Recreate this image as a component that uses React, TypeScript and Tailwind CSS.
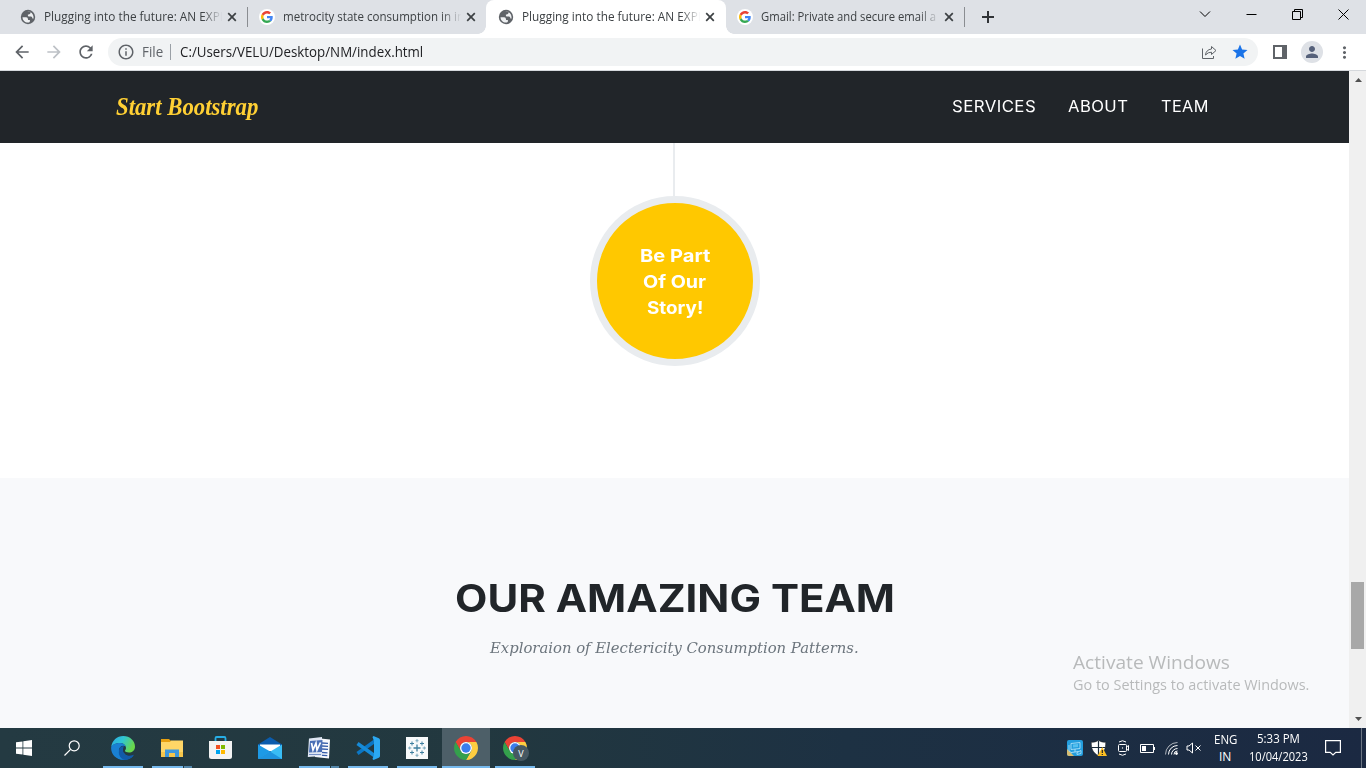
import { useLayoutEffect, useRef, useState } from "react";
import type { ReactNode } from "react";
import { MdArrowBack, MdArrowForward, MdRefresh, MdInfoOutline, MdStar, MdMoreVert, MdPerson } from "react-icons/md";

/* Single line of text stretched horizontally to a fixed width. */
function Fit({ w, className = "", children }: { w: number; className?: string; children: ReactNode }) {
  const ref = useRef<HTMLSpanElement>(null);
  const [scale, setScale] = useState(1);
  useLayoutEffect(() => {
    if (ref.current) setScale(w / ref.current.offsetWidth);
  }, [w]);
  return (
    <span className="inline-block" style={{ width: w }}>
      <span ref={ref} className={`inline-block origin-left whitespace-nowrap ${className}`} style={{ transform: `scaleX(${scale})` }}>
        {children}
      </span>
    </span>
  );
}

function GlobeIcon() {
  return (
    <svg viewBox="0 0 16 16" className="size-4 shrink-0">
      <circle cx="8" cy="8" r="7.200" fill="#5f6368" />
      <path fill="#eef0f2" d="M2.500 8.300h3.700q1.800.2 1.800 1.900v.9h1.900v1.200q0 .8-1 1.200C5.500 14 2.600 11.700 2.500 8.300z" />
      <path fill="#eef0f2" d="M7.200 2.600q2-.5 3.600.5l-.5 1.500q-.3.800-1.500.800H7.900v1.300q.1.700.9.700h2.300q.9.200 1.100 1.100l.2.900h1.200Q13.700 4.700 10.200 3z" />
    </svg>
  );
}

function GoogleIcon() {
  return (
    <span className="flex size-4 shrink-0 items-center justify-center rounded-full bg-white">
      <svg viewBox="0 0 48 48" className="size-3">
        <path fill="#EA4335" d="M24 9.5c3.54 0 6.71 1.22 9.21 3.6l6.85-6.85C35.9 2.38 30.47 0 24 0 14.62 0 6.51 5.38 2.56 13.22l7.98 6.19C12.43 13.72 17.74 9.5 24 9.5z" />
        <path fill="#4285F4" d="M46.98 24.55c0-1.57-.15-3.09-.38-4.55H24v9.02h12.94c-.58 2.96-2.26 5.48-4.78 7.18l7.73 6c4.51-4.18 7.09-10.36 7.09-17.65z" />
        <path fill="#FBBC05" d="M10.53 28.59c-.48-1.45-.76-2.99-.76-4.59s.27-3.14.76-4.59l-7.98-6.19C.92 16.46 0 20.12 0 24c0 3.88.92 7.54 2.56 10.78l7.97-6.19z" />
        <path fill="#34A853" d="M24 48c6.48 0 11.93-2.13 15.89-5.81l-7.73-6c-2.15 1.45-4.92 2.3-8.16 2.3-6.26 0-11.57-4.22-13.47-9.91l-7.98 6.19C6.51 42.62 14.62 48 24 48z" />
      </svg>
    </span>
  );
}

function ChromeIcon() {
  return (
    <svg viewBox="2 2 44 44" className="size-6">
      <path fill="#EA4335" d="M24 13H43.05A22 22 0 0 0 4.95 13L14.5 29.5A11 11 0 0 1 24 13z" />
      <path fill="#FFCD40" d="M43.05 13A22 22 0 0 1 24 46L33.5 29.5A11 11 0 0 0 24 13z" />
      <path fill="#34A04C" d="M4.95 13A22 22 0 0 0 24 46L33.5 29.5A11 11 0 0 1 14.5 29.5z" />
      <circle cx="24" cy="24" r="11" fill="#fff" />
      <circle cx="24" cy="24" r="8.6" fill="#3B7DED" />
    </svg>
  );
}

function Tab({ title, w, google, active, line }: { title: string; w: number; google?: boolean; active?: boolean; line?: boolean }) {
  return (
    <div className={`relative flex h-[34px] shrink-0 items-center pl-3 ${active ? "rounded-t-lg bg-white" : ""} ${active || line ? "-mr-px w-[240px]" : "w-[239px]"}`}>
      {active && (
        <>
          <span className="absolute bottom-0 -left-2 size-2 bg-[radial-gradient(circle_at_0_0,#dee1e6_7.5px,#fff_8px)]" />
          <span className="absolute -right-2 bottom-0 size-2 bg-[radial-gradient(circle_at_100%_0,#dee1e6_7.5px,#fff_8px)]" />
        </>
      )}
      {google ? <GoogleIcon /> : <GlobeIcon />}
      <div className="ml-2 h-[18px] w-[182px] shrink-0 text-[12px] leading-[18px] text-[#3c4043] [mask-image:linear-gradient(to_right,black_87%,transparent_98%)]">
        <Fit w={w}>{title}</Fit>
      </div>
      <svg viewBox="0 0 10 10" className="ml-px size-[10px] shrink-0">
        <path d="M1.2 1.2 8.8 8.8M8.8 1.2 1.2 8.8" stroke="#3c4043" strokeWidth="1.7" />
      </svg>
      {line && <span className="ml-[10px] h-5 w-px shrink-0 bg-[#8a8d91]" />}
    </div>
  );
}

function TaskSlot({ children, bar, active }: { children: ReactNode; bar?: "full" | "split"; active?: boolean }) {
  return (
    <div className={`relative flex h-10 shrink-0 items-center justify-center ${active ? "ml-px w-[48px] bg-[#4d5f68]" : "w-[49px]"}`}>
      {children}
      {bar && (
        <span className={`absolute bottom-0 flex h-[2px] gap-px ${active ? "inset-x-0" : "right-1 left-[5px]"}`}>
          <span className="flex-1 bg-[#76b9ed]" />
          {bar === "split" && <span className="w-2 bg-[#5487ab]" />}
        </span>
      )}
    </div>
  );
}

function TaskBar() {
  return (
    <div className="flex h-10 items-center bg-[linear-gradient(90deg,#243a42_0%,#22383f_35%,#1d3143_62%,#1b2942_100%)] text-white">
      <div className="flex w-[49px] justify-center pr-px">
        <svg viewBox="0 0 16 16" className="size-4">
          <path fill="#fff" d="M0 2.3 6.5 1.4V7.6H0zM7.3 1.3 16 0v7.6H7.3zM0 8.4h6.5v6.2L0 13.7zM7.3 8.4H16V16L7.3 14.7z" />
        </svg>
      </div>
      <div className="flex w-[49px] justify-center pr-1">
        <svg viewBox="0 0 16 16" className="size-4" fill="none" stroke="#fff" strokeWidth="1.2">
          <circle cx="10.2" cy="5.8" r="5" />
          <path d="M6.600 9.400.5 15.500" />
        </svg>
      </div>
      <TaskSlot bar="full">
        <svg viewBox="0 0 24 24" className="size-6">
          <defs>
            <linearGradient id="edgeTop" x1="0" y1="0" x2="1" y2=".4">
              <stop offset="0" stopColor="#2aa9e6" />
              <stop offset=".5" stopColor="#30c6d2" />
              <stop offset="1" stopColor="#69d84b" />
            </linearGradient>
            <linearGradient id="edgeBody" x1="0" y1="0" x2=".8" y2="1">
              <stop offset="0" stopColor="#1b94e0" />
              <stop offset="1" stopColor="#0a66be" />
            </linearGradient>
          </defs>
          <path fill="url(#edgeBody)" d="M1 9C0 17 5 24 13 24c4 0 7.300-1.700 9.500-4.500C20 21 15 20.500 13 17z" />
          <path fill="url(#edgeTop)" d="M.2 11C1 4.500 6 0 12.200 0 19 0 24 5 24 10.500c0 4-3 6-6 6-2.500 0-4-.8-4-1.700 0-.6 1-1 1-2.800C15 9 12 7 9 7 5 7 1.200 9 .2 11z" />
          <path fill="#125aa8" d="M8.500 12.500C6 18 10 24 15 23.800c3.500-.3 6-2.300 7.500-4.300.4-.6 0-.9-.5-.6-5 2-10 0-10-5 0-2.500 1.200-3.600 1.200-3.600s-3.500-.3-4.700 2.200z" />
          <path fill="#1a80d2" d="M.2 11C1.400 8.500 5 7 9 7c3.500 0 5.300 2 5.600 3.400-3.100-1.900-6.600.1-7.100 4.600-.3 4 2 7.600 5.500 8.900C5 24-.6 18 .2 11z" />
        </svg>
      </TaskSlot>
      <TaskSlot bar="split">
        <svg viewBox="0 0 22 18" className="h-[18px] w-[22px]">
          <path fill="#e8a010" d="M0 0h8l2 2v3H0z" />
          <path fill="#ffd667" d="M0 3h9l1-1.500h12V18H0z" />
          <path fill="#f7c64b" d="M0 13h22v5H0z" />
          <path fill="#3f98dc" d="M4 10.500h14V18h-4v-4H8v4H4z" />
        </svg>
      </TaskSlot>
      <TaskSlot>
        <svg viewBox="0 0 23 24" className="h-6 w-[23px]">
          <path d="M6.500 5.500V2.200c0-.8.400-1.200 1.200-1.200h7.600c.8 0 1.200.4 1.200 1.200v3.300" fill="none" stroke="#27aee6" strokeWidth="1.800" />
          <path fill="#f3f3f3" d="M0 5h23v15.500q0 2.500-2.500 2.500h-18Q0 23 0 20.500z" />
          <path fill="#f25022" d="M7 9h4v4H7z" /><path fill="#7fba00" d="M12 9h4v4h-4z" />
          <path fill="#00a4ef" d="M7 14h4v4H7z" /><path fill="#ffb900" d="M12 14h4v4h-4z" />
        </svg>
      </TaskSlot>
      <TaskSlot>
        <svg viewBox="0 0 24 22" className="h-[22px] w-6">
          <path fill="#0b5cad" d="M0 7.500 12 0l12 7.500V14H0z" />
          <path fill="#fff" d="M2 7.500h20V14H2z" />
          <path fill="#1d9ae6" d="M0 7.500 13 15 0 22z" />
          <path fill="#39bdf5" d="M24 7.500V22H0z" />
          <path fill="#1e94df" d="M0 22 12 14.500 24 22z" />
        </svg>
      </TaskSlot>
      <TaskSlot bar="split">
        <svg viewBox="0 0 24 24" className="size-6">
          <path fill="#f7f9fc" d="m9 2 14 1.500-1 19L8 21z" />
          <path stroke="#355da9" strokeWidth="1.300" d="m15 7 6 .4M15 10l6 .4M15 13l6 .4M9 16l11.500.8M9 18.800l11.300.9" />
          <path fill="#dfe7f4" d="M2 2.500 15 1v19L.8 21z" />
          <path fill="#4a70b6" d="M3 5 15.500 4l-.5 12-13 .5z" />
          <path fill="none" stroke="#fff" strokeWidth="1.700" d="m4.500 7 1.500 7 3-7 1 7 3.500-7.500" />
          <path stroke="#7590c5" d="M2 18.500h12" />
        </svg>
      </TaskSlot>
      <TaskSlot bar="full">
        <svg viewBox="0 0 24 24" className="size-6">
          <path fill="none" stroke="#0b77c5" strokeWidth="3.600" d="M19 5 1.500 17.500" />
          <path fill="none" stroke="#168bd8" strokeWidth="3.600" d="M1.500 7.500 19 20" />
          <path fill="#2ba8f2" d="m17.500 0 5.300 2.300q1.200.6 1.200 1.700v16q0 1.100-1.200 1.700L17.500 24l-1-1 1.500-4V5l-1.500-4z" />
        </svg>
      </TaskSlot>
      <TaskSlot bar="full">
        <svg viewBox="0 0 22 22" className="size-[22px]" fill="none" stroke="#3e7f9f">
          <path fill="#f8fafb" stroke="none" d="M0 0h22v22H0z" />
          <path strokeWidth="1.300" d="M11 7.500v7M7.500 11h7" />
          <path d="M6 4.500v4M4 6.500h4M16 4.500v4M14 6.500h4M6 13.500v4M4 15.500h4M16 13.500v4M14 15.500h4" />
          <path stroke="#7ba9bf" d="M11 2v3.400M9.500 3.700h3M11 16.600V20M9.500 18.300h3M2 11h3.400M3.700 9.500v3M16.600 11H20M18.300 9.500v3" />
        </svg>
      </TaskSlot>
      <TaskSlot bar="full" active><ChromeIcon /></TaskSlot>
      <TaskSlot bar="full">
        <ChromeIcon />
        <span className="absolute top-[17px] left-[23px] flex size-4 items-center justify-center rounded-full bg-[#465862] text-[9px] leading-none">V</span>
      </TaskSlot>

      <div className="ml-auto flex h-10 w-[299px] items-center">
        <svg viewBox="0 0 16 16" className="size-4">
          <rect width="16" height="16" rx="2" fill="#239ddd" />
          <path fill="#d7bd72" d="M0 9 7 16H2q-2 0-2-2z" />
          <path fill="none" stroke="#b9e7fb" strokeWidth=".8" d="M4 3.500 13 2.500v6l-9 1zM8 9v3M4.500 12.500l7-1M10 12.500l4-2v3l-4 1zM2 5v6l3 2" />
          <path fill="#55c0ef" d="M6 4.500 11 4v3L6 7.500z" />
        </svg>
        <svg viewBox="0 0 16 16" className="ml-2 size-4">
          <path fill="#fff" stroke="#111" strokeWidth=".5" d="M7.500.2C5.500 1.800 3 2.300.3 2.300c0 6 1 10.200 7.200 13.400 6.200-3.200 7.200-7.400 7.200-13.400-2.700 0-5.200-.5-7.200-2.100z" />
          <path stroke="#1a2a38" strokeWidth="1.200" d="M7.500.500v15M.5 7.500h14" />
          <path fill="#fcbf23" d="M11.300 7 16 16H6.500z" />
          <path stroke="#222" strokeWidth="1.200" d="M11.300 10v3M11.300 14v1" />
        </svg>
        <svg viewBox="0 0 14 18" className="ml-[10px] h-[18px] w-[14px]" fill="none" stroke="#fff">
          <path d="M2 3q3.500-2.500 7 0M2 15q3.500 2.500 7 0" />
          <rect x="1.500" y="5.500" width="8" height="7" rx="1" /><path d="m9.500 8 2-1.500v5L9.500 10" />
          <circle cx="5.500" cy="9" r=".3" />
        </svg>
        <svg viewBox="0 0 15 9" className="ml-[9px] h-[9px] w-[15px]" fill="none" stroke="#fff">
          <path d="M.5.500h13v8H.5zM14.500 3v3" /><path fill="#fff" stroke="none" d="M2 2h4v5H2z" />
        </svg>
        <svg viewBox="0 0 13 13" className="ml-[10px] size-[13px]" fill="none" stroke="#fff" strokeWidth="1">
          <path d="M.5 12.500A12 12 0 0 1 12.500.500" opacity=".65" /><path d="M3.500 12.500a9 9 0 0 1 9-9M6.500 12.500a6 6 0 0 1 6-6M9 12.500a3.500 3.500 0 0 1 3.500-3.500" />
          <circle cx="11.500" cy="11.500" r="1" fill="#fff" />
        </svg>
        <svg viewBox="0 0 16 12" className="ml-2 h-3 w-4" fill="none" stroke="#fff">
          <path d="M1 4h2l3.500-3v10L3 8H1zM9.500 3.500l5 5M14.500 3.500l-5 5" />
        </svg>
        <div className="ml-[11px] flex w-[24px] flex-col items-center pb-px text-[12px] leading-[17px]">
          <Fit w={23}>ENG</Fit>
          <Fit w={12}>IN</Fit>
        </div>
        <div className="ml-[11px] flex w-[60px] flex-col items-center pb-px text-[12px] leading-[18px]">
          <Fit w={43}>5:33 PM</Fit>
          <Fit w={59}>10/04/2023</Fit>
        </div>
        <svg viewBox="0 0 16 16" className="ml-[17px] size-4" fill="none" stroke="#fff" strokeWidth="1.200">
          <path d="M.6.600h14.800v11.800h-4.600L8 15l-2.800-2.600H.6z" />
        </svg>
        <span className="ml-5 h-10 w-px bg-[#6b7583]" />
      </div>
    </div>
  );
}

export default function App() {
  return (
    <div className="flex h-[768px] w-[1366px] flex-col overflow-hidden bg-white font-['Open_Sans',sans-serif]">
      <header className="flex h-[34px] shrink-0 bg-[#dee1e6] pl-2">
        <Tab title="Plugging into the future: AN EXPL" w={182} line />
        <Tab title="metrocity state consumption in in" w={181} google />
        <Tab title="Plugging into the future: AN EXPL" w={182} active />
        <Tab title="Gmail: Private and secure email a" w={175} google line />
        <svg viewBox="0 0 12 12" className="mt-[11px] ml-[18px] size-3">
          <path d="M6 0v12M0 6h12" stroke="#303336" strokeWidth="2" />
        </svg>
        <div className="mr-[17px] ml-auto flex h-7 items-center text-black">
          <svg viewBox="0 0 12 8" className="h-2 w-3" fill="none" stroke="currentColor"><path d="m1 1.500 5 5 5-5" /></svg>
          <svg viewBox="0 0 11 11" className="ml-[35px] size-[11px]" stroke="currentColor"><path d="M.5 5.500h10" /></svg>
          <svg viewBox="0 0 11 11" className="ml-[35px] size-[11px]" fill="none" stroke="currentColor"><path d="M.5 2.500h8v8h-8zM2.500 2.500v-2h8v8h-2" /></svg>
          <svg viewBox="0 0 11 11" className="ml-[35px] size-[11px]" stroke="currentColor"><path d="m.5.500 10 10M10.500.500l-10 10" /></svg>
        </div>
      </header>
      <div className="flex h-[37px] shrink-0 items-center border-b border-[#d5d8dc] pl-3 text-[#5f6368]">
        <MdArrowBack className="size-5" />
        <MdArrowForward className="ml-3 size-5 text-[#bdc1c6]" />
        <MdRefresh className="ml-3 size-5" />
        <div className="ml-3 flex h-7 w-[1150px] items-center rounded-full bg-[#f1f3f4] pl-[9px] text-[14px] leading-5">
          <MdInfoOutline className="size-[18px]" />
          <span className="ml-[7px] flex"><Fit w={21}>File</Fit></span>
          <span className="ml-[7px] h-4 w-px bg-[#9aa0a6]" />
          <span className="ml-[9px] flex text-[#202124]"><Fit w={243.5}>C:/Users/VELU/Desktop/NM/index.html</Fit></span>
          <svg viewBox="0 0 16 15" className="ml-auto h-[15px] w-4" fill="none" stroke="#5f6368">
            <path d="M1.500 3.500v10h11V11" />
            <path d="M10.500 1.500 15 5.500l-4.500 4V7.200q-3.500-.2-6 2.800.5-5.300 6-6z" strokeLinejoin="round" />
          </svg>
          <MdStar className="mr-[9px] ml-[14px] size-[18px] text-[#1a73e8]" />
        </div>
        <svg viewBox="0 0 14 14" className="ml-[15px] h-[14px] w-[14px]">
          <path fill="#5f6368" d="M0 0h14v14H0z" /><path fill="#fff" d="M2 2h7v10H2z" />
        </svg>
        <span className="ml-[14px] flex size-[22px] items-center justify-center rounded-full bg-[#dee1e6]">
          <MdPerson className="size-[18px] text-[#56617a]" />
        </span>
        <MdMoreVert className="ml-3 size-[19px]" />
      </div>

      <div className="flex h-[657px] shrink-0">
        <main className="relative flex w-[1349px] flex-col">
          <nav className="flex h-[72px] shrink-0 items-center bg-[#212529] pr-[141px] pl-[116px] font-['Inter',sans-serif]">
            <span className="flex font-['Liberation_Serif',serif] text-[25px] leading-8 font-bold text-[#ffd034] italic">
              <Fit w={142}>Start Bootstrap</Fit>
            </span>
            <div className="ml-auto flex gap-8 text-[15.400px] leading-6 text-white">
              <Fit w={84} className="tracking-[0.4px]">SERVICES</Fit>
              <Fit w={60.5} className="tracking-[0.4px]">ABOUT</Fit>
              <Fit w={47.5} className="tracking-[0.4px]">TEAM</Fit>
            </div>
          </nav>
          <section className="flex h-[335px] shrink-0 flex-col items-center">
            <span className="mr-px h-[53px] w-[2px] bg-[#e9ecef]" />
            <div className="ml-px flex size-[170px] flex-col items-center justify-center rounded-full border-[7px] border-[#e9ecef] bg-[#ffc800] pt-[2px] pr-px font-['Inter',sans-serif] text-[17.500px] leading-[26px] font-bold text-white">
              <Fit w={70}>Be Part</Fit>
              <Fit w={63}>Of Our</Fit>
              <Fit w={56}>Story!</Fit>
            </div>
          </section>
          <section className="flex flex-1 flex-col items-center bg-[#f8f9fb] pt-24">
            <h2 className="flex font-['Inter',sans-serif] text-[38.500px] leading-[48px] font-bold text-[#212529]">
              <Fit w={440}>OUR AMAZING TEAM</Fit>
            </h2>
            <p className="mt-[14px] flex font-['DejaVu_Serif',serif] text-[15.500px] leading-6 text-[#6c757d] italic">
              <Fit w={369}>Exploraion of Electericity Consumption Patterns.</Fit>
            </p>
          </section>
          <div className="absolute top-[577px] left-[1073px] flex flex-col text-[#b8babb]">
            <span className="flex text-[19px] leading-7"><Fit w={157}>Activate Windows</Fit></span>
            <span className="flex text-[14px] leading-[18px]"><Fit w={236}>Go to Settings to activate Windows.</Fit></span>
          </div>
        </main>
        <aside className="flex w-[17px] flex-col items-center bg-[#f0f0f0]">
          <svg viewBox="0 0 7 4" className="mt-[7px] ml-px h-1 w-[7px]"><path fill="#505050" d="M3.500 0 7 4H0z" /></svg>
          <span className="mt-[500px] h-[67px] w-[13px] bg-[#a8a8a8]" />
          <svg viewBox="0 0 7 4" className="mt-auto mb-[7px] ml-px h-1 w-[7px]"><path fill="#505050" d="M0 0h7L3.500 4z" /></svg>
        </aside>
      </div>
      <TaskBar />
    </div>
  );
}
